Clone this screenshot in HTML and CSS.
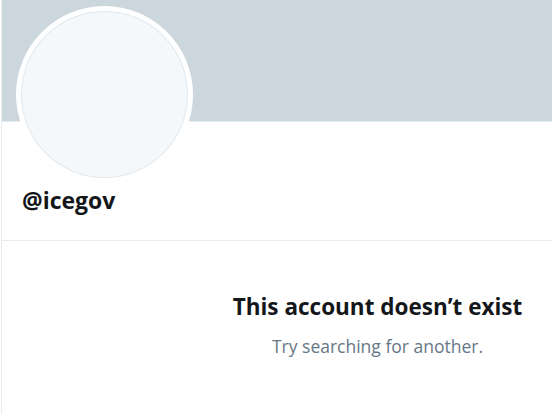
FILE: index.html
```html
<!DOCTYPE html>
<html>
<head>
<meta charset="utf-8">
<link rel="stylesheet" href="styles.css">
</head>
<body>
<div class="page">
  <div class="banner"></div>
  <div class="profile">
    <div class="avatar"><div class="avatar-inner"></div></div>
    <div class="handle">@icegov</div>
  </div>
  <div class="empty">
    <div class="empty-title">This account doesn’t exist</div>
    <div class="empty-sub">Try searching for another.</div>
  </div>
</div>
</body>
</html>
```
FILE: styles.css
```css
html, body {
  margin: 0;
  padding: 0;
  background: #ffffff;
}
body {
  font-family: "Open Sans", "Noto Sans", sans-serif;
  color: #14171a;
}
.page {
  width: 551px;
  height: 414px;
  margin-left: 1px;
  border-left: 1px solid #e6ecf0;
  overflow: hidden;
}
.banner {
  height: 121px;
  background: #ccd6dd;
  border-bottom: 1px solid #e6ecf0;
}
.profile {
  display: flow-root;
  padding: 0 0 0 14px;
  height: 118px;
  border-bottom: 1px solid #e6ecf0;
}
.avatar {
  width: 177px;
  height: 177px;
  margin-top: -116px;
  border-radius: 50%;
  background: #ffffff;
  padding: 5px;
  box-sizing: border-box;
}
.avatar-inner {
  width: 100%;
  height: 100%;
  border-radius: 50%;
  background: #f5f8fa;
  box-shadow: inset 0 0 0 1px #e4e9ed;
}
.handle {
  margin: 4px 0 0 6px;
  font-size: 23px;
  line-height: 26px;
  font-weight: 700;
  color: #14171a;
}
.empty {
  padding: 52px 0 0 200px;
  text-align: center;
}
.empty-title {
  font-size: 22.5px;
  line-height: 28px;
  font-weight: 700;
  color: #14171a;
}
.empty-sub {
  margin-top: 13px;
  font-size: 17.5px;
  line-height: 24px;
  color: #657786;
}
```
